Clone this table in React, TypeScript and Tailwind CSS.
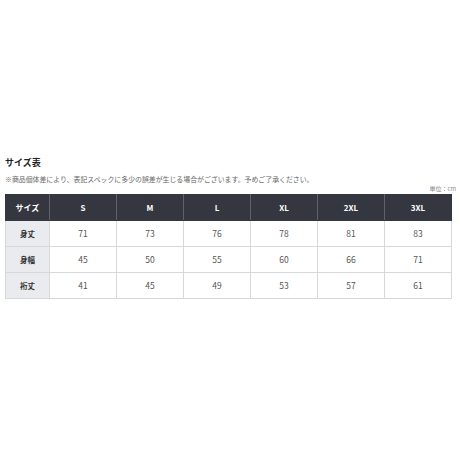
import React from "react";

const cols = ["S", "M", "L", "XL", "2XL", "3XL"];
const rows: [string, number[]][] = [
  ["身丈", [71, 73, 76, 78, 81, 83]],
  ["身幅", [45, 50, 55, 60, 66, 71]],
  ["裄丈", [41, 45, 49, 53, 57, 61]],
];

export default function App() {
  return (
    <div
      className="w-[460px] h-[460px] bg-white pt-[157px] pl-[5px] pr-[8px]"
      style={{ fontFamily: '"Noto Sans CJK JP", "Noto Sans", sans-serif' }}
    >
      <div className="text-[9px] font-bold text-[#222] leading-[12px]">サイズ表</div>
      <div className="mt-[6px] text-[6.9px] text-[#666] leading-[9px] whitespace-nowrap">
        ※商品個体差により、表記スペックに多少の誤差が生じる場合がございます。予めご了承ください。
      </div>
      <div className="text-right text-[6px] text-[#888] leading-[8px] mt-[1px] -mr-[4px]">単位：cm</div>
      <table className="mt-[1px] w-[447px] border-collapse table-fixed">
        <colgroup>
          <col className="w-[44px]" />
          {cols.map((c) => (
            <col key={c} />
          ))}
        </colgroup>
        <thead>
          <tr className="h-[26px] bg-[#34373f]">
            <th className="text-[8px] font-bold text-white border border-[#34373f] border-r-[#5f6268]">サイズ</th>
            {cols.map((c, i) => (
              <th
                key={c}
                className={`text-[8px] font-bold text-white border border-[#34373f] ${i < cols.length - 1 ? "border-r-[#5f6268]" : ""}`}
              >
                {c}
              </th>
            ))}
          </tr>
        </thead>
        <tbody>
          {rows.map(([label, vals]) => (
            <tr key={label} className="h-[26px]">
              <td className="text-center text-[7.5px] font-bold text-[#333] bg-[#e9ebee] border border-[#d6d8dc]">{label}</td>
              {vals.map((v, i) => (
                <td key={i} className="text-center text-[8.5px] text-[#555] border border-[#d6d8dc]">
                  {v}
                </td>
              ))}
            </tr>
          ))}
        </tbody>
      </table>
    </div>
  );
}
